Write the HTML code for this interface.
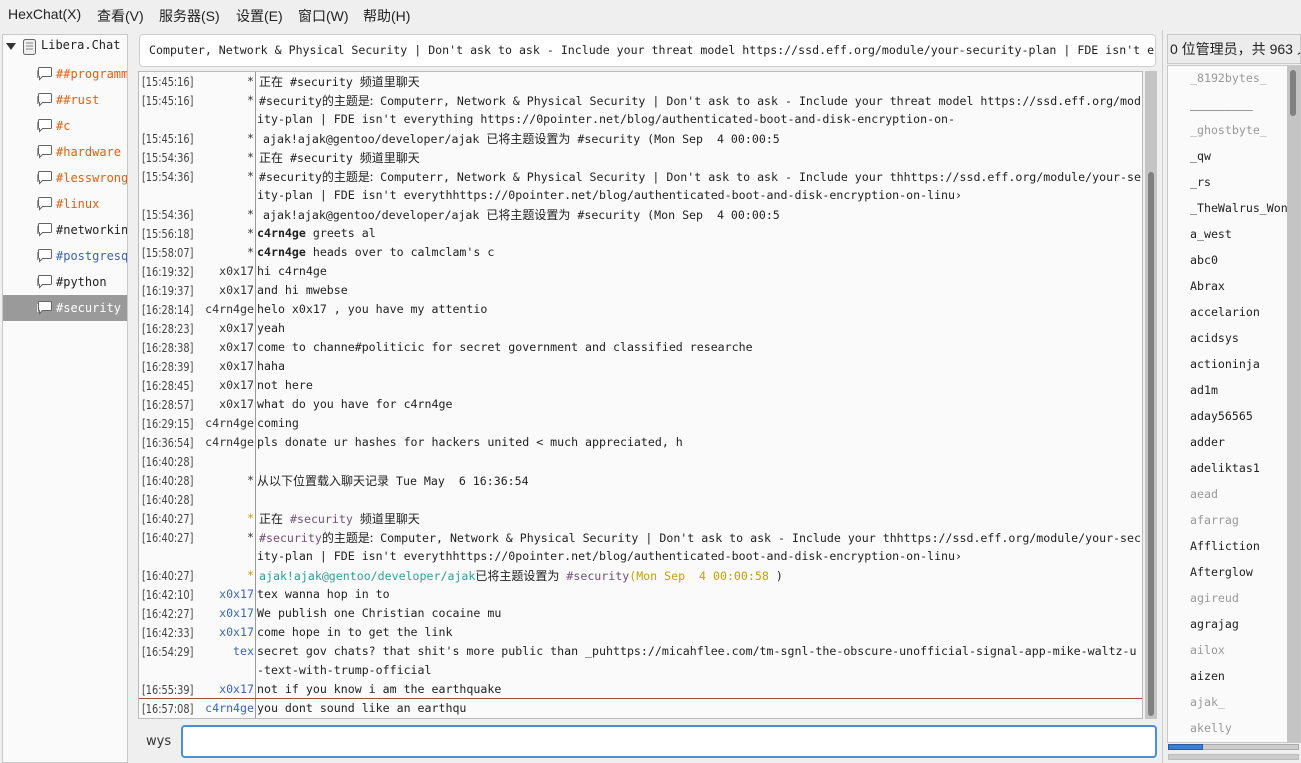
<!DOCTYPE html><html><head><meta charset="utf-8"><style>
*{box-sizing:border-box;margin:0;padding:0}
body{width:1301px;height:763px;background:#efefef;font-family:"DejaVu Sans","Noto Sans CJK SC",sans-serif;font-size:13px;color:#222;position:relative;overflow:hidden}
.abs{position:absolute}
.menu{top:0;left:0;width:1301px;height:31px;background:#efefef}
.menu span{position:absolute;top:6px;font-size:14px;color:#222;font-family:"Liberation Sans","Noto Sans CJK SC",sans-serif}
.tree{left:2px;top:34px;width:126px;height:729px;background:#fafafa;border:1px solid #c8c8c8;overflow:hidden}
.ti{position:absolute;left:0;width:126px;height:26px;font-family:"DejaVu Sans Mono",monospace;font-size:12px;line-height:26px;white-space:nowrap;overflow:hidden}
.ti svg{position:absolute;left:33px;top:5px}
.ti .t{position:absolute;left:53px}
.topic{left:139px;top:34px;width:1017px;height:33px;background:#fff;border:1px solid #cfcfcf;border-radius:4px;font-family:"DejaVu Sans Mono",monospace;font-size:11.6px;line-height:31px;padding-left:9px;white-space:nowrap;overflow:hidden}
.chat{left:138px;top:71px;width:1005px;height:648px;background:#fafafa;border:1px solid #bbb;overflow:hidden}
.sep{left:116px;top:0;width:1px;height:648px;background:#999}
.r{position:absolute;left:0;width:1005px;height:19px;line-height:19px;white-space:pre}
.ts{position:absolute;left:3px;top:0;line-height:19px;color:#444;font-family:"DejaVu Sans",sans-serif;font-size:12.5px;transform:scaleX(0.78);transform-origin:left center}
.nk{position:absolute;right:890px;font-family:"DejaVu Sans Mono",monospace;font-size:11.6px;color:#333}
.tx{position:absolute;left:118px;width:885px;overflow:hidden;font-family:"DejaVu Sans Mono","Noto Sans CJK SC",monospace;font-size:11.6px}
.pd{padding-left:2px}.pd2{padding-left:6px}
.cj{font-family:"Noto Sans CJK SC",sans-serif;font-size:12px}
.b{color:#3b66b3}.p{color:#75507b}.g{color:#2aa198}.y{color:#c4a000}
.ul li{list-style:none;position:absolute;left:22px;font-family:"DejaVu Sans Mono",monospace;font-size:11.6px;color:#222}
.ul li.d{color:#999}
</style></head><body>
<div class="abs menu">
<span style="left:8px">HexChat(X)</span><span style="left:97px">查看(V)</span><span style="left:159px">服务器(S)</span><span style="left:236px">设置(E)</span><span style="left:298px">窗口(W)</span><span style="left:363px">帮助(H)</span>
</div>
<div class="abs tree">
<div class="abs" style="left:3px;top:8px;width:0;height:0;border-left:5px solid transparent;border-right:5px solid transparent;border-top:7px solid #333"></div>
<svg class="abs" style="left:19px;top:3px" width="16" height="18" viewBox="0 0 16 18"><rect x="1.5" y="1.5" width="12" height="15" rx="2" fill="#eee" stroke="#666"/><line x1="4" y1="5" x2="11" y2="5" stroke="#888"/><line x1="4" y1="8" x2="11" y2="8" stroke="#888"/><line x1="4" y1="11" x2="11" y2="11" stroke="#888"/></svg>
<div class="abs" style="left:38px;top:3px;font-family:'DejaVu Sans Mono',monospace;font-size:12px">Libera.Chat</div>
<div class="ti" style="top:26px;color:#e06010"><svg width="17" height="16" viewBox="0 0 17 16"><path d="M3.5 1.5h11a1 1 0 0 1 1 1v7a1 1 0 0 1-1 1h-8l-3 3v-3h0a1 1 0 0 1-1-1v-7a1 1 0 0 1 1-1z" fill="#fff" stroke="#666"/><path d="M1.5 4v7.5h1" fill="none" stroke="#999"/></svg><span class="t">##programming</span></div>
<div class="ti" style="top:52px;color:#e06010"><svg width="17" height="16" viewBox="0 0 17 16"><path d="M3.5 1.5h11a1 1 0 0 1 1 1v7a1 1 0 0 1-1 1h-8l-3 3v-3h0a1 1 0 0 1-1-1v-7a1 1 0 0 1 1-1z" fill="#fff" stroke="#666"/><path d="M1.5 4v7.5h1" fill="none" stroke="#999"/></svg><span class="t">##rust</span></div>
<div class="ti" style="top:78px;color:#e06010"><svg width="17" height="16" viewBox="0 0 17 16"><path d="M3.5 1.5h11a1 1 0 0 1 1 1v7a1 1 0 0 1-1 1h-8l-3 3v-3h0a1 1 0 0 1-1-1v-7a1 1 0 0 1 1-1z" fill="#fff" stroke="#666"/><path d="M1.5 4v7.5h1" fill="none" stroke="#999"/></svg><span class="t">#c</span></div>
<div class="ti" style="top:104px;color:#e06010"><svg width="17" height="16" viewBox="0 0 17 16"><path d="M3.5 1.5h11a1 1 0 0 1 1 1v7a1 1 0 0 1-1 1h-8l-3 3v-3h0a1 1 0 0 1-1-1v-7a1 1 0 0 1 1-1z" fill="#fff" stroke="#666"/><path d="M1.5 4v7.5h1" fill="none" stroke="#999"/></svg><span class="t">#hardware</span></div>
<div class="ti" style="top:130px;color:#e06010"><svg width="17" height="16" viewBox="0 0 17 16"><path d="M3.5 1.5h11a1 1 0 0 1 1 1v7a1 1 0 0 1-1 1h-8l-3 3v-3h0a1 1 0 0 1-1-1v-7a1 1 0 0 1 1-1z" fill="#fff" stroke="#666"/><path d="M1.5 4v7.5h1" fill="none" stroke="#999"/></svg><span class="t">#lesswrong</span></div>
<div class="ti" style="top:156px;color:#e06010"><svg width="17" height="16" viewBox="0 0 17 16"><path d="M3.5 1.5h11a1 1 0 0 1 1 1v7a1 1 0 0 1-1 1h-8l-3 3v-3h0a1 1 0 0 1-1-1v-7a1 1 0 0 1 1-1z" fill="#fff" stroke="#666"/><path d="M1.5 4v7.5h1" fill="none" stroke="#999"/></svg><span class="t">#linux</span></div>
<div class="ti" style="top:182px;color:#222"><svg width="17" height="16" viewBox="0 0 17 16"><path d="M3.5 1.5h11a1 1 0 0 1 1 1v7a1 1 0 0 1-1 1h-8l-3 3v-3h0a1 1 0 0 1-1-1v-7a1 1 0 0 1 1-1z" fill="#fff" stroke="#666"/><path d="M1.5 4v7.5h1" fill="none" stroke="#999"/></svg><span class="t">#networking</span></div>
<div class="ti" style="top:208px;color:#3b66b3"><svg width="17" height="16" viewBox="0 0 17 16"><path d="M3.5 1.5h11a1 1 0 0 1 1 1v7a1 1 0 0 1-1 1h-8l-3 3v-3h0a1 1 0 0 1-1-1v-7a1 1 0 0 1 1-1z" fill="#fff" stroke="#666"/><path d="M1.5 4v7.5h1" fill="none" stroke="#999"/></svg><span class="t">#postgresql</span></div>
<div class="ti" style="top:234px;color:#222"><svg width="17" height="16" viewBox="0 0 17 16"><path d="M3.5 1.5h11a1 1 0 0 1 1 1v7a1 1 0 0 1-1 1h-8l-3 3v-3h0a1 1 0 0 1-1-1v-7a1 1 0 0 1 1-1z" fill="#fff" stroke="#666"/><path d="M1.5 4v7.5h1" fill="none" stroke="#999"/></svg><span class="t">#python</span></div>
<div class="ti" style="top:260px;color:#fff;background:#9a9a9a"><svg width="17" height="16" viewBox="0 0 17 16"><path d="M3.5 1.5h11a1 1 0 0 1 1 1v7a1 1 0 0 1-1 1h-8l-3 3v-3h0a1 1 0 0 1-1-1v-7a1 1 0 0 1 1-1z" fill="#fff" stroke="#666"/><path d="M1.5 4v7.5h1" fill="none" stroke="#ddd"/></svg><span class="t">#security</span></div>
</div>
<div class="abs topic">Computer, Network &amp; Physical Security | Don't ask to ask - Include your threat model https://ssd.eff.org/module/your-security-plan | FDE isn't everything</div>
<div class="abs chat">
<div class="abs sep"></div>
<div class="r" style="top:0"><span class="ts">[15:45:16]</span><span class="nk">*</span><span class="tx pd"><span class="cj">正在</span> #security <span class="cj">频道里聊天</span></span></div>
<div class="r" style="top:19px"><span class="ts">[15:45:16]</span><span class="nk">*</span><span class="tx pd">#security<span class="cj">的主题是:</span> Computerr, Network &amp; Physical Security | Don't ask to ask - Include your threat model https://ssd.eff.org/module</span></div>
<div class="r" style="top:38px"><span class="tx">ity-plan | FDE isn't everything https://0pointer.net/blog/authenticated-boot-and-disk-encryption-on-</span></div>
<div class="r" style="top:57px"><span class="ts">[15:45:16]</span><span class="nk">*</span><span class="tx pd2">ajak!ajak@gentoo/developer/ajak <span class="cj">已将主题设置为</span> #security (Mon Sep  4 00:00:5</span></div>
<div class="r" style="top:76px"><span class="ts">[15:54:36]</span><span class="nk">*</span><span class="tx pd"><span class="cj">正在</span> #security <span class="cj">频道里聊天</span></span></div>
<div class="r" style="top:95px"><span class="ts">[15:54:36]</span><span class="nk">*</span><span class="tx pd">#security<span class="cj">的主题是:</span> Computerr, Network &amp; Physical Security | Don't ask to ask - Include your thhttps://ssd.eff.org/module/your-sec</span></div>
<div class="r" style="top:114px"><span class="tx">ity-plan | FDE isn't everythhttps://0pointer.net/blog/authenticated-boot-and-disk-encryption-on-linu›</span></div>
<div class="r" style="top:133px"><span class="ts">[15:54:36]</span><span class="nk">*</span><span class="tx pd2">ajak!ajak@gentoo/developer/ajak <span class="cj">已将主题设置为</span> #security (Mon Sep  4 00:00:5</span></div>
<div class="r" style="top:152px"><span class="ts">[15:56:18]</span><span class="nk">*</span><span class="tx"><b>c4rn4ge</b> greets al</span></div>
<div class="r" style="top:171px"><span class="ts">[15:58:07]</span><span class="nk">*</span><span class="tx"><b>c4rn4ge</b> heads over to calmclam's c</span></div>
<div class="r" style="top:190px"><span class="ts">[16:19:32]</span><span class="nk">x0x17</span><span class="tx">hi c4rn4ge</span></div>
<div class="r" style="top:209px"><span class="ts">[16:19:37]</span><span class="nk">x0x17</span><span class="tx">and hi mwebse</span></div>
<div class="r" style="top:228px"><span class="ts">[16:28:14]</span><span class="nk">c4rn4ge</span><span class="tx">helo x0x17 , you have my attentio</span></div>
<div class="r" style="top:247px"><span class="ts">[16:28:23]</span><span class="nk">x0x17</span><span class="tx">yeah</span></div>
<div class="r" style="top:266px"><span class="ts">[16:28:38]</span><span class="nk">x0x17</span><span class="tx">come to channe#politicic for secret government and classified researche</span></div>
<div class="r" style="top:285px"><span class="ts">[16:28:39]</span><span class="nk">x0x17</span><span class="tx">haha</span></div>
<div class="r" style="top:304px"><span class="ts">[16:28:45]</span><span class="nk">x0x17</span><span class="tx">not here</span></div>
<div class="r" style="top:323px"><span class="ts">[16:28:57]</span><span class="nk">x0x17</span><span class="tx">what do you have for c4rn4ge</span></div>
<div class="r" style="top:342px"><span class="ts">[16:29:15]</span><span class="nk">c4rn4ge</span><span class="tx">coming</span></div>
<div class="r" style="top:361px"><span class="ts">[16:36:54]</span><span class="nk">c4rn4ge</span><span class="tx">pls donate ur hashes for hackers united &lt; much appreciated, h</span></div>
<div class="r" style="top:380px"><span class="ts">[16:40:28]</span></div>
<div class="r" style="top:399px"><span class="ts">[16:40:28]</span><span class="nk">*</span><span class="tx"><span class="cj">从以下位置载入聊天记录</span> Tue May  6 16:36:54</span></div>
<div class="r" style="top:418px"><span class="ts">[16:40:28]</span></div>
<div class="r" style="top:437px"><span class="ts">[16:40:27]</span><span class="nk y">*</span><span class="tx pd"><span class="cj">正在</span> <span class="p">#security</span> <span class="cj">频道里聊天</span></span></div>
<div class="r" style="top:456px"><span class="ts">[16:40:27]</span><span class="nk">*</span><span class="tx pd"><span class="p">#security</span><span class="cj">的主题是:</span> Computer, Network &amp; Physical Security | Don't ask to ask - Include your thhttps://ssd.eff.org/module/your-sec</span></div>
<div class="r" style="top:475px"><span class="tx">ity-plan | FDE isn't everythhttps://0pointer.net/blog/authenticated-boot-and-disk-encryption-on-linu›</span></div>
<div class="r" style="top:494px"><span class="ts">[16:40:27]</span><span class="nk y">*</span><span class="tx pd"><span class="g">ajak!ajak@gentoo/developer/ajak</span><span class="cj">已将主题设置为</span> <span class="p">#security</span><span class="y">(Mon Sep  4 00:00:58 </span>)</span></div>
<div class="r" style="top:513px"><span class="ts">[16:42:10]</span><span class="nk b">x0x17</span><span class="tx">tex wanna hop in to</span></div>
<div class="r" style="top:532px"><span class="ts">[16:42:27]</span><span class="nk b">x0x17</span><span class="tx">We publish one Christian cocaine mu</span></div>
<div class="r" style="top:551px"><span class="ts">[16:42:33]</span><span class="nk b">x0x17</span><span class="tx">come hope in to get the link</span></div>
<div class="r" style="top:570px"><span class="ts">[16:54:29]</span><span class="nk b">tex</span><span class="tx">secret gov chats? that shit's more public than _puhttps://micahflee.com/tm-sgnl-the-obscure-unofficial-signal-app-mike-waltz-u</span></div>
<div class="r" style="top:589px"><span class="tx">-text-with-trump-official</span></div>
<div class="r" style="top:608px"><span class="ts">[16:55:39]</span><span class="nk b">x0x17</span><span class="tx">not if you know i am the earthquake</span></div>
<div class="abs" style="left:0;top:626px;width:1005px;height:1px;background:#a0522d"></div>
<div class="r" style="top:627px"><span class="ts">[16:57:08]</span><span class="nk b">c4rn4ge</span><span class="tx">you dont sound like an earthqu</span></div>
</div>
<div class="abs" style="left:1145px;top:71px;width:12px;height:648px;background:#c4c4c4"></div>
<div class="abs" style="left:1148px;top:172px;width:6px;height:544px;background:#808080;border-radius:3px"></div>
<div class="abs" style="left:146px;top:734px;font-size:13px;color:#333">wys</div>
<div class="abs" style="left:181px;top:725px;width:976px;height:33px;background:#fff;border:2px solid #4a90d9;border-radius:4px"></div>
<div class="abs" style="left:1162px;top:30px;width:1px;height:733px;background:#ccc"></div>
<div class="abs" style="left:1167px;top:34px;width:134px;height:30px;border:1px solid #c8c8c8;background:#ececec;font-size:14px;line-height:28px;padding-left:2px;white-space:nowrap;overflow:hidden;font-family:'Liberation Sans','Noto Sans CJK SC',sans-serif">0 位管理员，共 963 人</div>
<div class="abs" style="left:1167px;top:65px;width:134px;height:678px;background:#fafafa;border:1px solid #c8c8c8;overflow:hidden">
<ul class="ul">
<li class="d" style="top:5px">_8192bytes_</li>
<li style="top:31px">_________</li>
<li class="d" style="top:57px">_ghostbyte_</li>
<li style="top:83px">_qw</li>
<li style="top:109px">_rs</li>
<li style="top:135px">_TheWalrus_Won</li>
<li style="top:161px">a_west</li>
<li style="top:187px">abc0</li>
<li style="top:213px">Abrax</li>
<li style="top:239px">accelarion</li>
<li style="top:265px">acidsys</li>
<li style="top:291px">actioninja</li>
<li style="top:317px">ad1m</li>
<li style="top:343px">aday56565</li>
<li style="top:369px">adder</li>
<li style="top:395px">adeliktas1</li>
<li class="d" style="top:421px">aead</li>
<li class="d" style="top:447px">afarrag</li>
<li style="top:473px">Affliction</li>
<li style="top:499px">Afterglow</li>
<li class="d" style="top:525px">agireud</li>
<li style="top:551px">agrajag</li>
<li class="d" style="top:577px">ailox</li>
<li style="top:603px">aizen</li>
<li class="d" style="top:629px">ajak_</li>
<li class="d" style="top:655px">akelly</li>
</ul>
<div class="abs" style="left:119px;top:0;width:14px;height:678px;background:#c4c4c4"></div>
<div class="abs" style="left:122px;top:4px;width:6px;height:46px;background:#808080;border-radius:3px"></div>
</div>
<div class="abs" style="left:1168px;top:744px;width:131px;height:6px;background:#ccc;border:1px solid #aaa"></div>
<div class="abs" style="left:1168px;top:744px;width:35px;height:6px;background:#3b7fd0;border:1px solid #2a5a9a"></div>
<div class="abs" style="left:1168px;top:754px;width:131px;height:6px;background:#ccc;border:1px solid #bbb"></div>
</body></html>
